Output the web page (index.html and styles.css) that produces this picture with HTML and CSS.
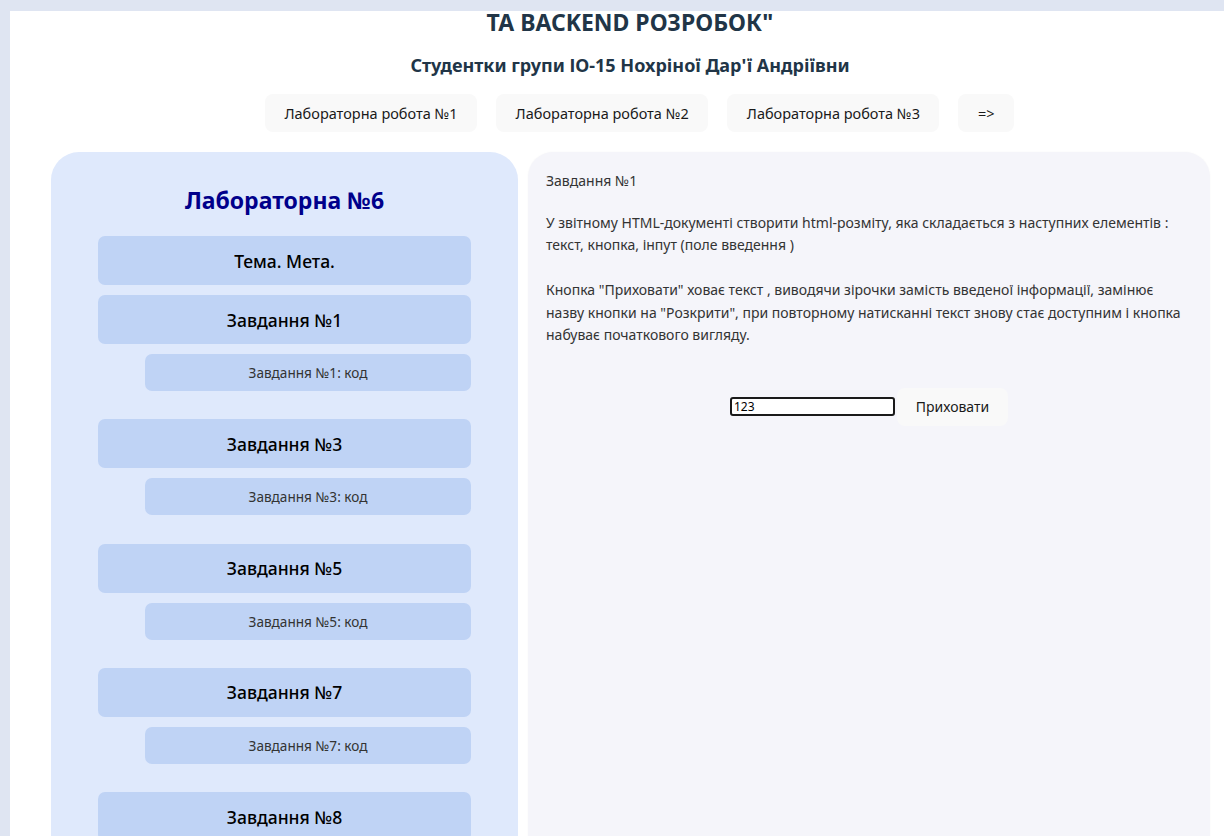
FILE: index.html
```html
<!DOCTYPE html>
<html lang="uk">
<head>
<meta charset="utf-8">
<title>Лабораторна №6</title>
<link rel="stylesheet" href="styles.css">
</head>
<body>
<div class="page">
  <header class="head">
    <h1 class="title">ТА BACKEND РОЗРОБОК"</h1>
    <h2 class="subtitle">Студентки групи ІО-15 Нохріної Дар'ї Андріївни</h2>
    <nav class="nav">
      <button class="nav-btn">Лабораторна робота №1</button>
      <button class="nav-btn">Лабораторна робота №2</button>
      <button class="nav-btn">Лабораторна робота №3</button>
      <button class="nav-btn">=&gt;</button>
    </nav>
  </header>
  <main class="main">
    <aside class="side">
      <h3 class="side-title">Лабораторна №6</h3>
      <div class="item">Тема. Мета.</div>
      <div class="group">
        <div class="item">Завдання №1</div>
        <div class="sub">Завдання №1: код</div>
      </div>
      <div class="group">
        <div class="item">Завдання №3</div>
        <div class="sub">Завдання №3: код</div>
      </div>
      <div class="group">
        <div class="item">Завдання №5</div>
        <div class="sub">Завдання №5: код</div>
      </div>
      <div class="group">
        <div class="item">Завдання №7</div>
        <div class="sub">Завдання №7: код</div>
      </div>
      <div class="group">
        <div class="item">Завдання №8</div>
      </div>
    </aside>
    <section class="content">
      <p class="task-name">Завдання №1</p>
      <p class="task-text">У звітному HTML-документі створити html-розміту, яка складається з наступних елементів :<br>текст, кнопка, інпут (поле введення )<br><br>Кнопка "Приховати" ховає текст , виводячи зірочки замість введеної інформації, замінює<br>назву кнопки на "Розкрити", при повторному натисканні текст знову стає доступним і кнопка<br>набуває початкового вигляду.</p>
      <div class="demo">
        <input class="demo-input" type="text" value="123">
        <button class="demo-btn">Приховати</button>
      </div>
    </section>
  </main>
</div>
</body>
</html>
```
FILE: styles.css
```css
html, body {
  margin: 0;
  padding: 0;
}
body {
  background: #dfe5f2;
  height: 836px;
  overflow: hidden;
  font-family: "Noto Sans", "Open Sans", sans-serif;
}
.page {
  margin: 13px 0 0 10px;
  width: 1240px;
  min-height: 900px;
  background: #ffffff;
}
.head {
  text-align: center;
  color: #213547;
}
.title {
  margin: -2px 0 0;
  font-size: 23px;
  line-height: 22px;
  font-weight: 700;
}
.subtitle {
  margin: 20px 0 0;
  font-size: 18px;
  line-height: 24px;
  font-weight: 700;
}
.nav {
  display: flex;
  justify-content: center;
  margin-top: 17px;
}
.nav-btn {
  margin-left: 19px;
  height: 38px;
  padding: 0 18.5px;
  border: 1px solid transparent;
  border-radius: 8px;
  background: #f9f9f9;
  color: #1a1a1a;
  font-family: inherit;
  font-size: 14.5px;
  cursor: pointer;
}
.main {
  display: flex;
  align-items: flex-start;
  gap: 10px;
  margin-top: 20px;
  padding-left: 41px;
}
.side {
  width: 467px;
  box-sizing: border-box;
  padding: 33px 47px 40px;
  background: #dfe9fc;
  border-radius: 28px;
  min-height: 720px;
}
.side-title {
  margin: 0 0 21px;
  text-align: center;
  color: #00008b;
  font-size: 23px;
  line-height: 30px;
  font-weight: 700;
}
.item {
  height: 49px;
  display: flex;
  align-items: center;
  justify-content: center;
  background: #bfd3f5;
  border-radius: 7px;
  color: #000;
  font-size: 17.5px;
  font-weight: 500;
  margin-bottom: 10px;
}
.group {
  margin-bottom: 28.3px;
}
.sub {
  height: 37px;
  margin-left: 47px;
  display: flex;
  align-items: center;
  justify-content: center;
  background: #bfd3f5;
  border-radius: 7px;
  color: #333;
  font-size: 13.6px;
}
.content {
  width: 682px;
  box-sizing: border-box;
  min-height: 720px;
  padding: 18px 18px;
  background: #f5f5fa;
  border-radius: 25px;
  box-shadow: 0 0 2px rgba(0, 0, 0, 0.04);
  color: #333;
  font-size: 14px;
  line-height: 22.5px;
}
.task-name {
  margin: 0 0 19px;
}
.task-text {
  margin: 0;
}
.demo {
  display: flex;
  align-items: center;
  justify-content: center;
  margin-top: 41px;
}
.demo-input {
  width: 165px;
  height: 19px;
  box-sizing: border-box;
  border: 2px solid #1a1a1a;
  border-radius: 3px;
  padding: 0 2px;
  font-family: inherit;
  font-size: 12px;
  color: #000;
  background: #fff;
}
.demo-btn {
  margin-left: 2px;
  width: 111px;
  height: 38px;
  border: 1px solid transparent;
  border-radius: 8px;
  background: #f9f9f9;
  color: #1a1a1a;
  font-family: inherit;
  font-size: 14px;
  cursor: pointer;
}
```
